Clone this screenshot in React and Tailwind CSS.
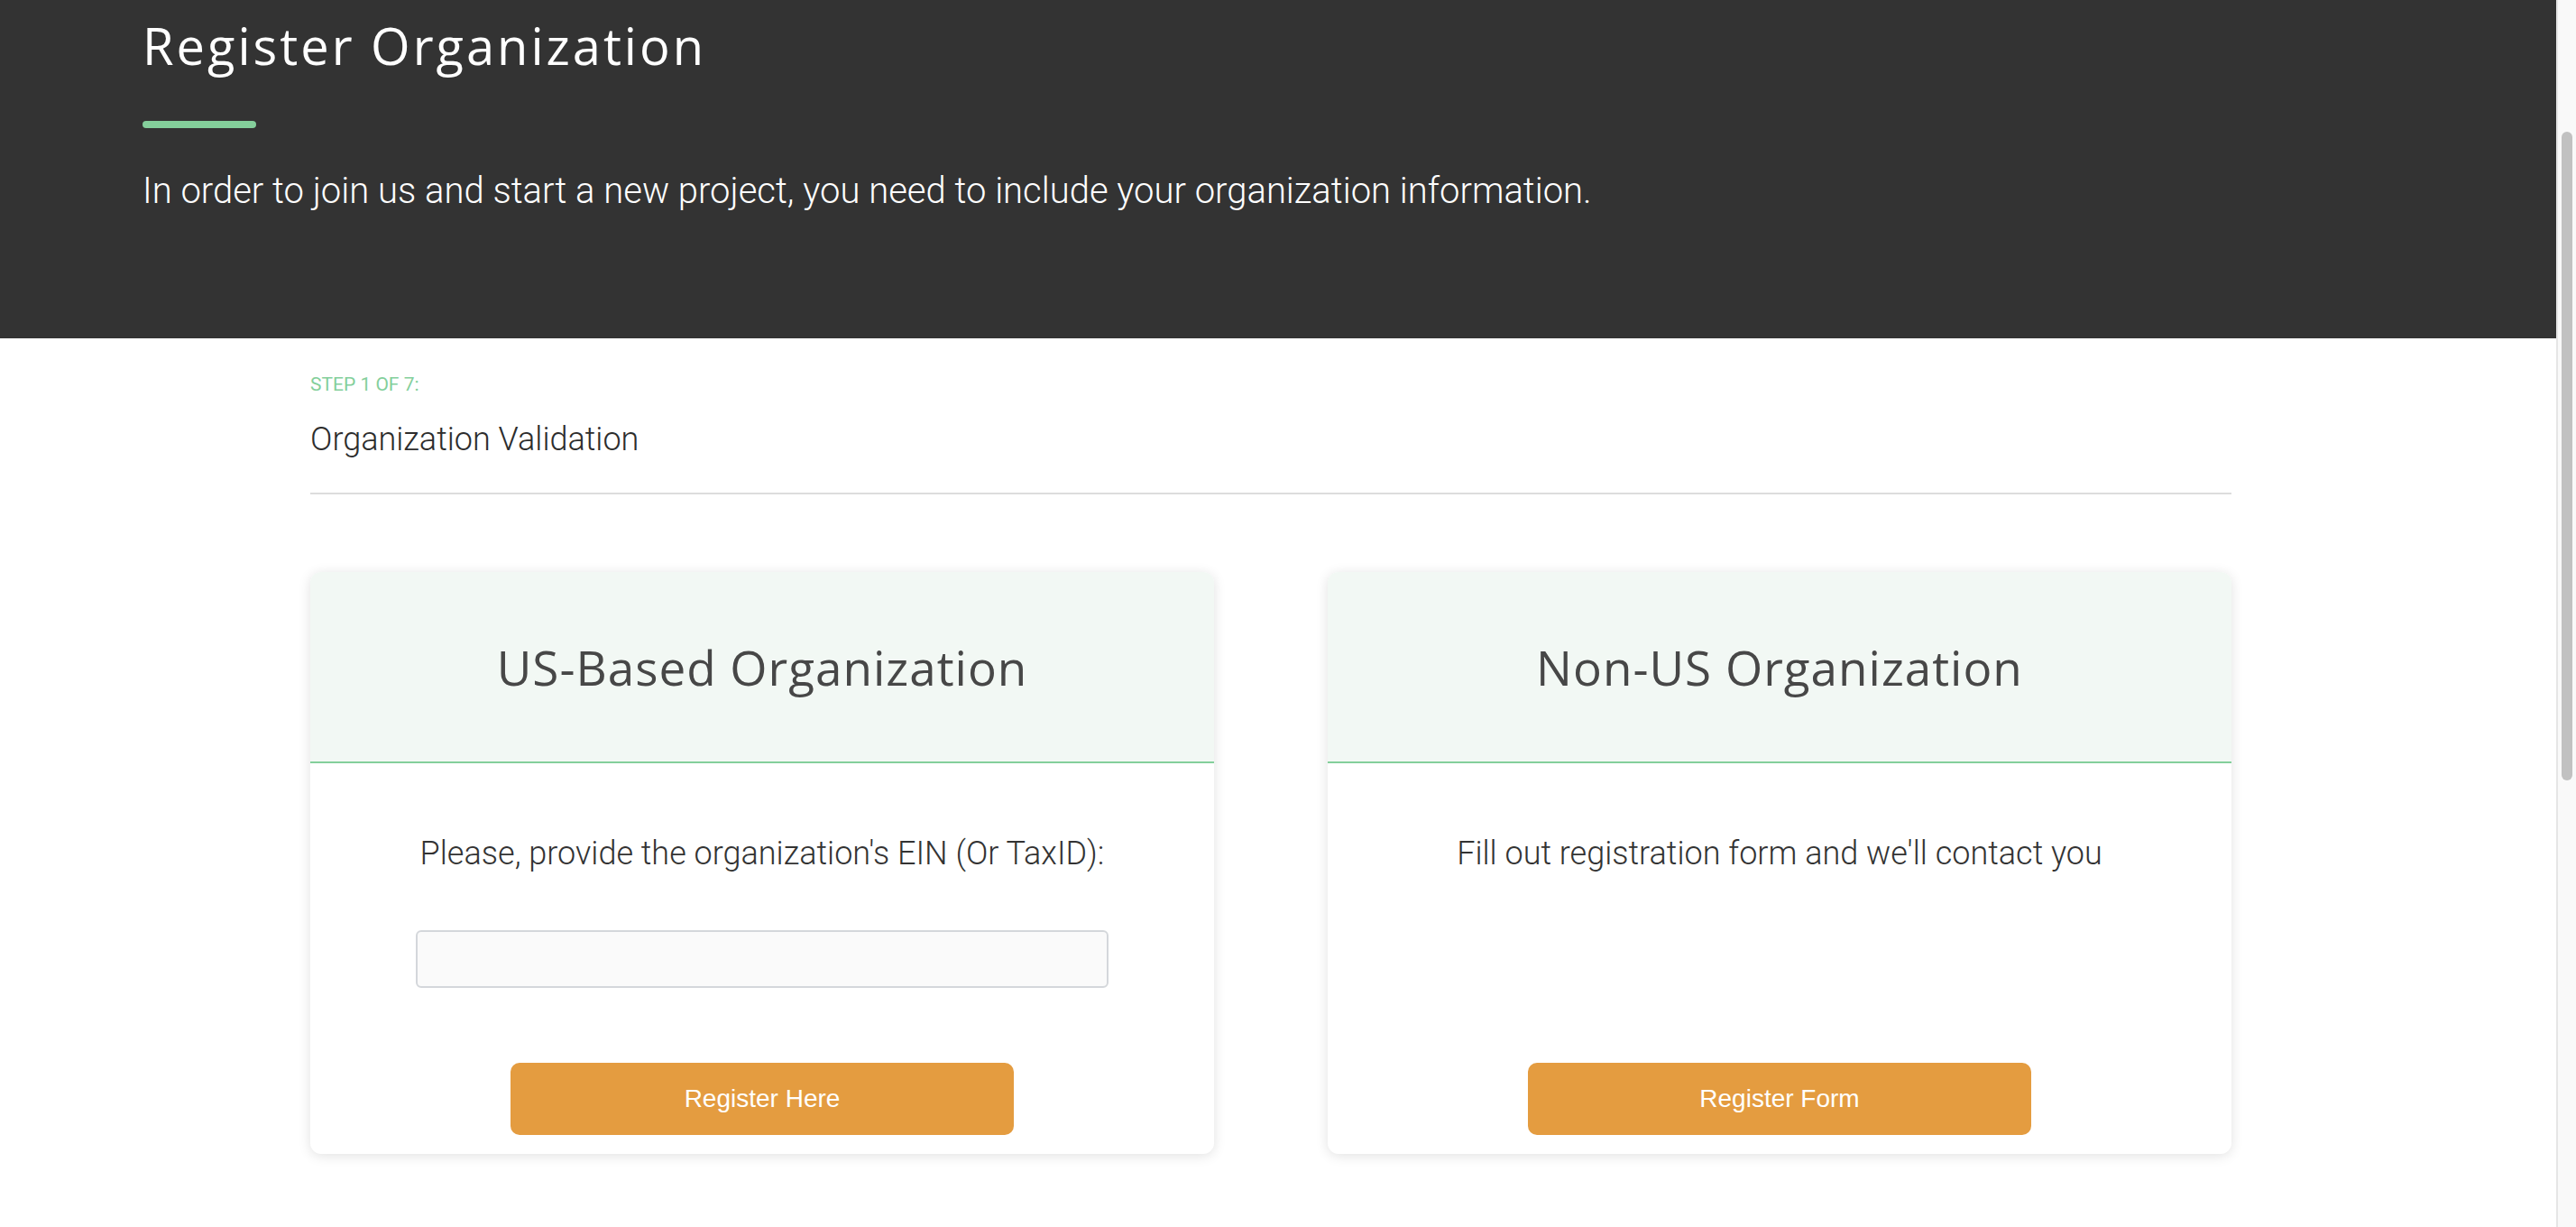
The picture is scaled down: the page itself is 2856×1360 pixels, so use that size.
import React from 'react';

function OrgCard({ title, text, withInput, buttonLabel }) {
    return (
        <div className="flex flex-col bg-white rounded-[12px] shadow-[0_2px_14px_rgba(0,0,0,0.12)] overflow-hidden">
            {/* Encabezado de la tarjeta */}
            <div className="h-[210px] flex items-center justify-center bg-[#f2f8f4] border-b-2 border-[#84cf9b] box-content">
                <h2 className="text-[53px] leading-[53px] tracking-[1px] text-[#474747] font-['Open_Sans',sans-serif]">
                    {title}
                </h2>
            </div>

            <div className="flex flex-col flex-1 items-center pt-[82px] pb-[21px]">
                <p className="text-[36px] leading-[36px] font-light text-[#333] font-['Roboto',sans-serif] text-center">
                    {text}
                </p>
                {withInput && (
                    <input
                        type="text"
                        className="mt-[67px] w-[768px] h-[64px] bg-[#fafafa] border-2 border-[#d4d7db] rounded-[6px] px-4 text-[28px] outline-none"
                    />
                )}
                <button className="mt-auto w-[558px] h-[80px] rounded-[10px] bg-[#e49c40] text-white text-[28px] font-['Liberation_Sans',Arial,sans-serif]">
                    {buttonLabel}
                </button>
            </div>
        </div>
    );
}

export default function App() {
    return (
        <div className="flex h-[1360px] overflow-hidden bg-white">
            <div className="flex-1 flex flex-col">
                {/* Cabecera oscura */}
                <header className="h-[375px] bg-[#333333] pl-[158px] pt-[22px] shrink-0">
                    <h1 className="text-[56px] leading-[56px] tracking-[3px] text-white font-['Open_Sans',sans-serif]">
                        Register Organization
                    </h1>
                    <div className="mt-[56px] w-[126px] h-[8px] rounded-full bg-[#84cf9b]"></div>
                    <p className="mt-[50px] text-[40px] leading-[40px] font-light text-white font-['Roboto',sans-serif]">
                        In order to join us and start a new project, you need to include your organization information.
                    </p>
                </header>

                <main className="pl-[344px] w-[2474px] pt-[41px]">
                    <div className="text-[21px] leading-[21px] text-[#84cf9b] font-['Roboto',sans-serif] uppercase">
                        Step 1 of 7:
                    </div>
                    <h3 className="mt-[33px] text-[36px] leading-[35px] font-light text-[#2d2d2d] font-['Roboto',sans-serif]">
                        Organization Validation
                    </h3>
                    <div className="mt-[41px] h-[2px] bg-[#dddddd]"></div>

                    <div className="mt-[86px] grid grid-cols-2 gap-[126px] h-[645px]">
                        <OrgCard
                            title="US-Based Organization"
                            text="Please, provide the organization's EIN (Or TaxID):"
                            withInput
                            buttonLabel="Register Here"
                        />
                        <OrgCard
                            title="Non-US Organization"
                            text="Fill out registration form and we'll contact you"
                            buttonLabel="Register Form"
                        />
                    </div>
                </main>
            </div>

            {/* Barra de desplazamiento */}
            <div className="w-[22px] shrink-0 bg-[#f9f9f9] border-l-2 border-[#e6e6e6] pt-[146px] flex justify-center">
                <div className="w-[12px] h-[719px] rounded-full bg-[#c1c1c1]"></div>
            </div>
        </div>
    );
}
